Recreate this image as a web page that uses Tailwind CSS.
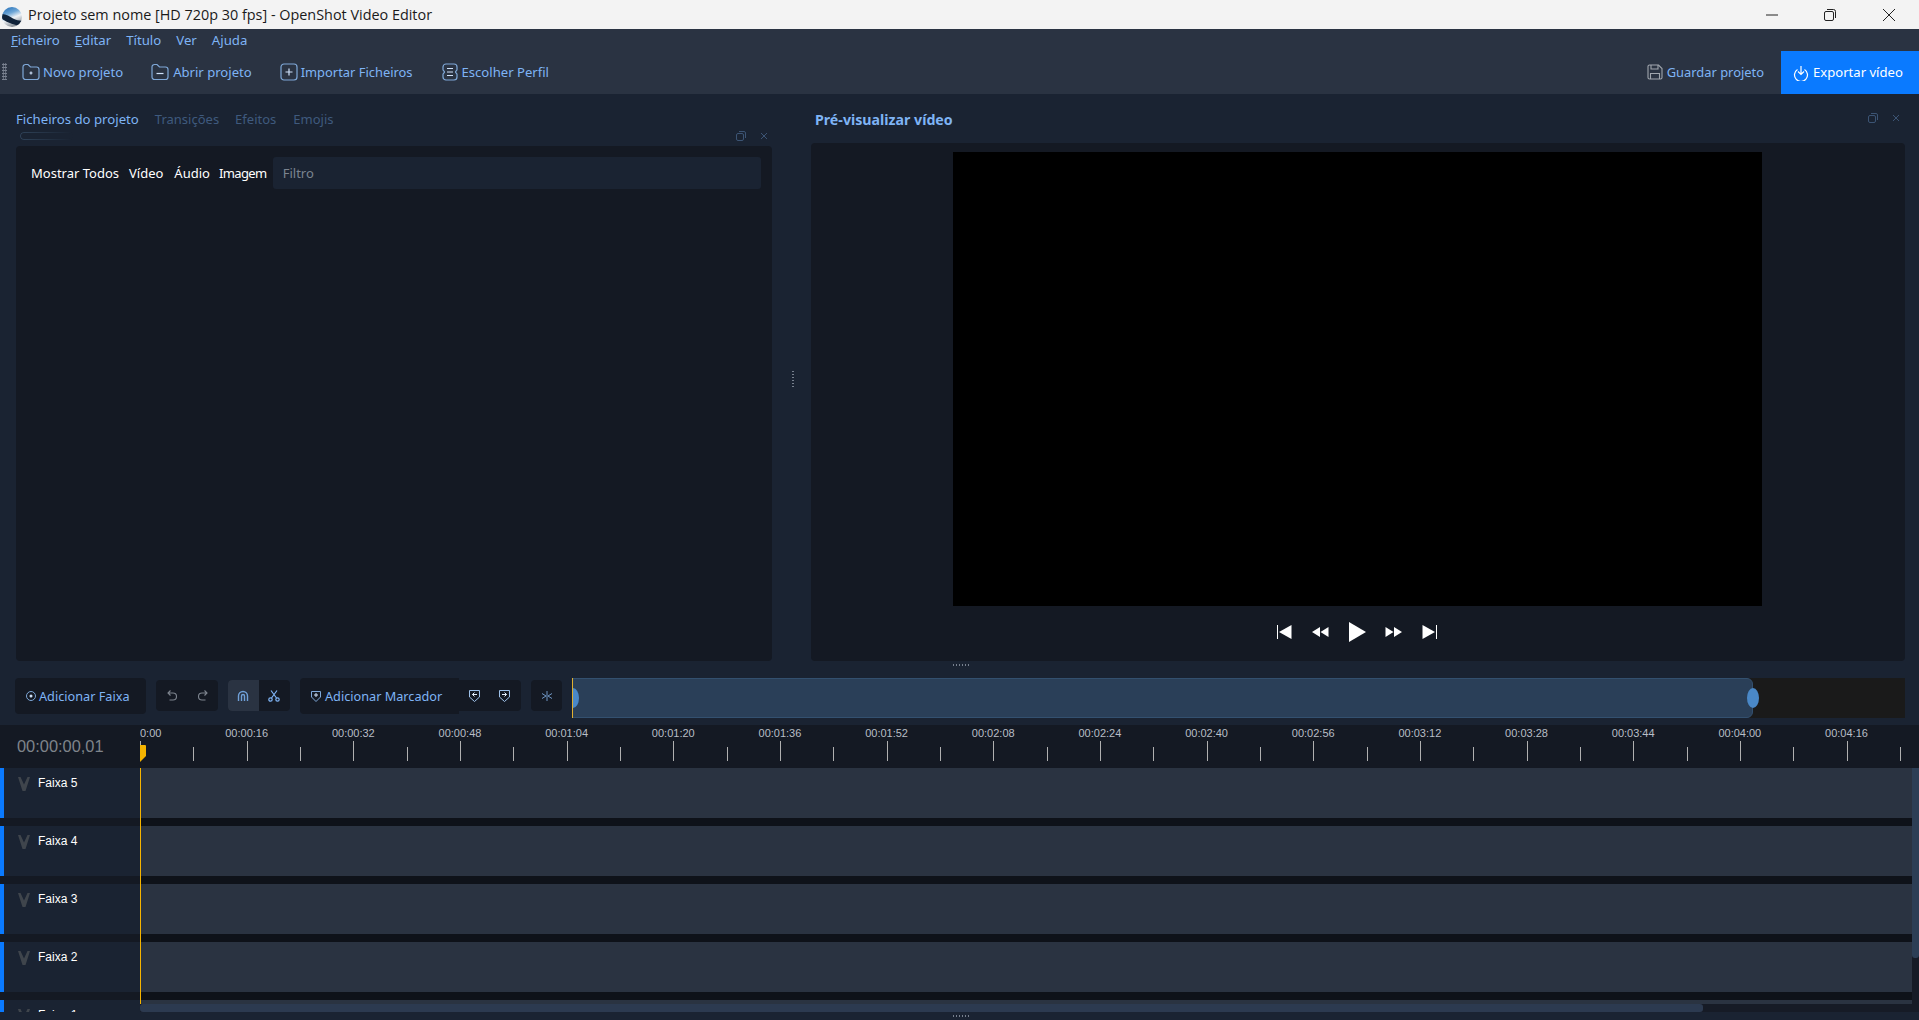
<!DOCTYPE html>
<html>
<head>
<meta charset="utf-8">
<script src="https://cdn.jsdelivr.net/npm/@tailwindcss/browser@4"></script>
</head>
<body class="m-0 overflow-hidden">
<div class="w-[1919px] h-[1020px] flex flex-col overflow-hidden bg-[#1a2332] font-['Noto_Sans',sans-serif] text-[13px]">

  <!-- title bar -->
  <div class="h-[29px] shrink-0 bg-[#f3f3f3] flex items-center text-[#1a1a1a]">
    <svg class="ml-[2px] mt-[4px] w-[20px] h-[20px]" viewBox="0 0 20 20">
      <defs>
        <linearGradient id="g" x1="0.3" y1="0" x2="0.7" y2="1"><stop offset="0" stop-color="#2f78bd"/><stop offset="0.3" stop-color="#6ea6d6"/><stop offset="0.55" stop-color="#eef2f6"/><stop offset="1" stop-color="#6f7780"/></linearGradient>
        <clipPath id="c"><circle cx="10" cy="10" r="10"/></clipPath>
      </defs>
      <circle cx="10" cy="10" r="10" fill="url(#g)"/>
      <path clip-path="url(#c)" d="M0 7 C4 7 8 9.500 11 11.500 C14 13 17 13.500 20 14 L20 19 C13 18.500 6 16 0 12 Z" fill="#10233a"/>
    </svg>
    <span class="ml-[6px] text-[14.4px] font-['Open_Sans',sans-serif]">Projeto sem nome [HD 720p 30 fps] - OpenShot Video Editor</span>
    <div class="ml-auto flex items-center">
      <div class="w-[58px] flex justify-center"><svg class="w-[14px] h-[14px]" viewBox="0 0 14 14"><path d="M1 7H13" stroke="#222" stroke-width="1"/></svg></div>
      <div class="w-[58px] mr-[1px] flex justify-center"><svg class="w-[14px] h-[14px]" viewBox="0 0 14 14" fill="none" stroke="#222"><rect x="1.5" y="3.5" width="9" height="9" rx="1.5"/><path d="M4 1.5H10.5a2 2 0 0 1 2 2V10"/></svg></div>
      <div class="w-[58px] mr-[1px] flex justify-center"><svg class="w-[14px] h-[14px]" viewBox="0 0 14 14" stroke="#222" stroke-width="1"><path d="M1 1L13 13M13 1L1 13"/></svg></div>
    </div>
  </div>

  <!-- menu bar -->
  <div class="h-[22px] shrink-0 bg-[#2a3342] flex items-center pl-[11px] pt-[2px] gap-[15px] text-[#7fb4f5] text-[13.2px]">
    <span><span class="underline">F</span>icheiro</span>
    <span><span class="underline">E</span>ditar</span>
    <span>Título</span>
    <span>Ver</span>
    <span>Ajuda</span>
  </div>

  <!-- toolbar -->
  <div class="h-[43px] shrink-0 bg-[#2a3342] flex items-center text-[#7fb4f5] text-[13.1px]">
    <div class="ml-[2px] w-[5px] h-[17px] mb-[2px] bg-[radial-gradient(#7a8290_1px,transparent_1px)] bg-[length:2.5px_3px]"></div>
    <div class="ml-[15px] flex items-center gap-[3px]">
      <svg class="w-[18px] h-[18px]" viewBox="0 0 18 18" fill="none" stroke="#7fa8d8" stroke-width="1.2"><path d="M1 4a2.5 2.5 0 0 1 2.5-2.5H6L8.5 4h6A2.5 2.5 0 0 1 17 6.5V14a2.5 2.5 0 0 1-2.5 2.5h-11A2.5 2.5 0 0 1 1 14Z"/><path d="M7.5 10h3M9 8.5v3" stroke="#cfe2fa"/></svg>
      <span>Novo projeto</span>
    </div>
    <div class="ml-[28px] flex items-center gap-[4px]">
      <svg class="w-[18px] h-[18px]" viewBox="0 0 18 18" fill="none" stroke="#7fa8d8" stroke-width="1.2"><path d="M1 4a2.5 2.5 0 0 1 2.5-2.5H6L8.5 4h6A2.5 2.5 0 0 1 17 6.5V14a2.5 2.5 0 0 1-2.5 2.5h-11A2.5 2.5 0 0 1 1 14Z"/><path d="M5.5 10.5h7" stroke="#cfe2fa"/></svg>
      <span>Abrir projeto</span>
    </div>
    <div class="ml-[28px] flex items-center gap-[3px]">
      <svg class="w-[18px] h-[18px]" viewBox="0 0 18 18" fill="none" stroke="#7fa8d8" stroke-width="1.2"><rect x="1" y="1" width="16" height="16" rx="3"/><path d="M5.5 9h7M9 5.5v7" stroke="#cfe2fa"/></svg>
      <span class="text-[12.9px]">Importar Ficheiros</span>
    </div>
    <div class="ml-[28px] flex items-center gap-[3px]">
      <svg class="w-[18px] h-[18px]" viewBox="0 0 18 18" fill="none" stroke="#7fa8d8" stroke-width="1.2"><path d="M5 1H13a3 3 0 0 1 3 3v2.500c0 1.500-1.500 1.500-1.500 2.500s1.500 1 1.500 2.500V14a3 3 0 0 1-3 3H5a3 3 0 0 1-3-3v-2.500c0-1.500 1.500-1.500 1.500-2.500S2 8 2 6.500V4a3 3 0 0 1 3-3Z"/><path d="M6 5.500h6M6 9h6M6 12.500h6" stroke="#cfe2fa"/></svg>
      <span>Escolher Perfil</span>
    </div>
    <div class="ml-auto flex items-center gap-[4px] mr-[17px]">
      <svg class="w-[16px] h-[16px]" viewBox="0 0 16 16" fill="none" stroke="#a0a6ae" stroke-width="1.1"><path d="M1 2.500A1.500 1.500 0 0 1 2.500 1h9L15 4.500v9a1.500 1.500 0 0 1-1.500 1.500h-11A1.500 1.500 0 0 1 1 13.500Z"/><path d="M4 1v4h7V1M3.500 15V9.500h9V15"/></svg>
      <span class="text-[12.9px]">Guardar projeto</span>
    </div>
    <div class="w-[138px] h-[43px] bg-[#0a7aff] flex items-center pl-[12px] gap-[4px] text-white">
      <svg class="w-[16px] h-[16px]" viewBox="0 0 16 16" fill="none" stroke="#fff" stroke-width="1.2"><path d="M4.500 4.500A6.500 6.500 0 1 0 11.500 4.500"/><path d="M8 1v8M5 6.500L8 9.500 11 6.500"/></svg>
      <span>Exportar vídeo</span>
    </div>
  </div>

  <!-- main panes -->
  <div class="h-[571px] shrink-0 flex">
    <!-- left pane -->
    <div class="w-[772px] pl-[16px] flex flex-col">
      <div class="relative h-[52px] shrink-0 flex items-start pt-[16px] gap-[16px] text-[13px] text-[#3f5a7e]">
        <span class="text-[13.2px] text-[#7fb4f5]">Ficheiros do projeto</span>
        <span>Transições</span>
        <span>Efeitos</span>
        <span class="ml-[1px]">Emojis</span>
        <div class="absolute left-[4px] top-[38px] w-[53px] h-[8px] rounded-[4px] border border-[#2f4258] border-r-0 [mask-image:linear-gradient(to_right,black,transparent)]"></div>
        <svg class="absolute right-[26px] top-[37px] w-[10px] h-[10px]" viewBox="0 0 10 10" fill="none" stroke="#3c5474"><rect x="0.500" y="2.500" width="7" height="7" rx="1.500"/><path d="M3 .5h5a1.500 1.500 0 0 1 1.500 1.500V7"/></svg>
        <svg class="absolute right-[3px] top-[37px] w-[10px] h-[10px]" viewBox="0 0 10 10" stroke="#3c5474"><path d="M2 2L8 8M8 2L2 8"/></svg>
      </div>
      <div class="flex-1 bg-[#141923] rounded-[4px] mb-[4px] pt-[11px] pl-[15px] pr-[11px]">
        <div class="flex items-center h-[32px] pt-[2px] text-white">
          <span>Mostrar Todos</span>
          <span class="ml-[10px]">Vídeo</span>
          <span class="ml-[11px]">Áudio</span>
          <span class="ml-[9px] tracking-[-0.6px]">Imagem</span>
          <div class="ml-[6px] flex-1 h-[32px] self-start mt-[-2px] pt-[2px] bg-[#1a2332] rounded-[3px] flex items-center pl-[10px] text-[#7b8490]">Filtro</div>
        </div>
      </div>
    </div>
    <!-- splitter -->
    <div class="w-[39px] shrink-0 flex justify-center items-start pt-[277px] pl-[2px]">
      <div class="w-[2px] h-[17px] bg-[repeating-linear-gradient(to_bottom,#77808e_0_1px,transparent_1px_3px)]"></div>
    </div>
    <!-- right pane -->
    <div class="flex-1 pr-[14px] flex flex-col">
      <div class="relative h-[49px] shrink-0 pl-[4px] pt-[15px] font-bold text-[14.2px] text-[#7fb4f5]">Pré-visualizar vídeo
        <svg class="absolute right-[27px] top-[19px] w-[10px] h-[10px]" viewBox="0 0 10 10" fill="none" stroke="#3c5474"><rect x="0.500" y="2.500" width="7" height="7" rx="1.500"/><path d="M3 .5h5a1.500 1.500 0 0 1 1.500 1.500V7"/></svg>
        <svg class="absolute right-[4px] top-[19px] w-[10px] h-[10px]" viewBox="0 0 10 10" stroke="#3c5474"><path d="M2 2L8 8M8 2L2 8"/></svg>
      </div>
      <div class="flex-1 bg-[#141923] rounded-[4px] mb-[4px] pr-[2px] flex flex-col items-center pt-[9px]">
        <div class="w-[809px] h-[454px] bg-black"></div>
        <div class="flex-1 flex items-center gap-[19px] pb-[3px]">
          <svg class="w-[16px] h-[16px]" viewBox="0 0 16 16" fill="#fff"><rect x="1" y="1" width="1" height="14"/><path d="M15.500 1V15L3 8Z"/></svg>
          <svg class="w-[18px] h-[12px]" viewBox="0 0 18 12" fill="#fff"><path d="M9 1V11L1 6ZM17.500 1V11L9.500 6Z"/></svg>
          <svg class="w-[18px] h-[20px]" viewBox="0 0 18 20" fill="#fff"><path d="M1 0V20L18 10Z"/></svg>
          <svg class="w-[18px] h-[12px]" viewBox="0 0 18 12" fill="#fff"><path d="M9 1V11L17 6ZM.5 1V11L8.500 6Z"/></svg>
          <svg class="w-[16px] h-[16px]" viewBox="0 0 16 16" fill="#fff"><rect x="14" y="1" width="1" height="14"/><path d="M.5 1V15L13 8Z"/></svg>
        </div>
      </div>
    </div>
  </div>

  <!-- horizontal splitter -->
  <div class="h-[13px] shrink-0 flex justify-center items-start pl-[4px]">
    <div class="w-[17px] h-[2px] mt-[-1px] bg-[repeating-linear-gradient(to_right,#77808e_0_1px,transparent_1px_3px)]"></div>
  </div>

  <!-- timeline toolbar -->
  <div class="h-[47px] shrink-0 flex items-start pl-[15px] pr-[14px] text-[#7fb4f5] text-[12.7px]">
    <div class="h-[36px] w-[131px] bg-[#141923] rounded-[4px] flex items-center pl-[11px] gap-[3px]">
      <svg class="w-[10px] h-[10px]" viewBox="0 0 10 10" fill="none" stroke="#7fa8d8"><circle cx="5" cy="5" r="4.500"/><circle cx="5" cy="5" r="1.500" fill="#cfe2fa" stroke="none"/></svg>
      <span class="pt-[2px]">Adicionar Faixa</span>
    </div>
    <div class="ml-[10px] mt-[2px] h-[31px] w-[62px] bg-[#141923] rounded-[4px] flex items-center">
      <div class="w-[31px] flex justify-center"><svg class="w-[10px] h-[11px]" viewBox="0 0 10 11" fill="none" stroke="#7d848e" stroke-width="1.100"><path d="M3.500 .5L1 3 3.500 5.500M1 3h5a3 3 0 0 1 0 7H2.500"/></svg></div>
      <div class="w-[31px] flex justify-center"><svg class="w-[10px] h-[11px]" viewBox="0 0 10 11" fill="none" stroke="#7d848e" stroke-width="1.100"><path d="M6.500 .5L9 3 6.500 5.500M9 3H4a3 3 0 0 0 0 7h3.500"/></svg></div>
    </div>
    <div class="ml-[10px] mt-[2px] h-[31px] w-[62px] bg-[#141923] rounded-[4px] flex overflow-hidden">
      <div class="w-[31px] pr-[2px] bg-[#2a3342] flex items-center justify-center">
        <svg class="w-[12px] h-[12px]" viewBox="0 0 12 12" fill="none" stroke="#6fa0d8" stroke-width="1.400"><path d="M1.500 11V6a4.500 4.500 0 0 1 9 0v5"/><path d="M4.500 11V6a1.500 1.500 0 0 1 3 0v5"/></svg>
      </div>
      <div class="flex-1 pr-[2px] flex items-center justify-center">
        <svg class="w-[12px] h-[12px]" viewBox="0 0 12 12" fill="none" stroke="#7fb4f5" stroke-width="1.200"><path d="M3 .5L8.500 8M9 .5L3.500 8"/><circle cx="2.500" cy="9.500" r="1.700"/><circle cx="9.500" cy="9.500" r="1.700"/></svg>
      </div>
    </div>
    <div class="ml-[10px] h-[36px] w-[159px] bg-[#141923] rounded-l-[4px] flex items-center pl-[11px] gap-[4px]">
      <svg class="w-[10px] h-[12px]" viewBox="0 0 10 12" fill="none" stroke="#7fa8d8"><path d="M.5 1.500h9V7L5 11.500.5 7Z"/><path d="M3 5h4M5 3v4" stroke="#cfe2fa"/></svg>
      <span class="pt-[2px]">Adicionar Marcador</span>
    </div>
    <div class="mt-[2px] h-[31px] w-[62px] bg-[#141923] rounded-r-[4px] flex items-center">
      <div class="w-[30px] flex justify-center"><svg class="w-[11px] h-[13px]" viewBox="0 0 11 13" fill="none" stroke="#9fc2ea"><path d="M.5 1.500h10V8L5.500 12.500.5 8Z"/><path d="M8 5.500H3.500M5.500 3.500l-2 2 2 2" stroke="#e4effc"/></svg></div>
      <div class="w-[30px] flex justify-center"><svg class="w-[11px] h-[13px]" viewBox="0 0 11 13" fill="none" stroke="#9fc2ea"><path d="M.5 1.500h10V8L5.500 12.500.5 8Z"/><path d="M3 5.500h4.500M5.500 3.500l2 2-2 2" stroke="#e4effc"/></svg></div>
    </div>
    <div class="ml-[10px] mt-[2px] h-[31px] w-[31px] bg-[#141923] rounded-[4px] flex items-center justify-center">
      <svg class="w-[12px] h-[10px]" viewBox="0 0 12 10" fill="none" stroke="#6f96c4"><path d="M6 0V10M1 2.500L5 5 1 7.500M11 2.500L7 5 11 7.500"/></svg>
    </div>
    <div class="relative ml-[10px] h-[40px] flex-1 bg-[#1a1a1a]">
      <div class="h-[40px] w-[1181px] bg-[#2a3f58] border border-[#33506f] rounded-r-[6px]"></div>
      <div class="absolute left-0 top-0 bottom-0 w-[1px] bg-[#e0b030]"></div>
      <div class="absolute left-[1px] top-[10px] w-[6px] h-[20px] rounded-[0_100%_100%_0/0_50%_50%_0] bg-[#4a88c7]"></div>
      <div class="absolute left-[1175px] top-[10px] w-[12px] h-[20px] rounded-[50%] bg-[#4a88c7]"></div>
    </div>
  </div>

  <!-- ruler -->
  <div class="h-[43px] shrink-0 bg-[#141923] flex font-['Liberation_Sans',sans-serif] overflow-hidden">
    <div class="w-[140px] shrink-0 pl-[17px] pt-[11px] text-[16.4px] leading-[20px] text-[#7f848b]">00:00:00,01</div>
    <div class="relative flex-1 overflow-hidden">
      <div class="h-[16px] flex text-[11px] leading-[16px] text-[#b8bec6] whitespace-nowrap">
        <div class="w-[53.333px] shrink-0 pl-[0px]">0:00</div>
        <div class="w-[106.667px] shrink-0 text-center">00:00:16</div>
        <div class="w-[106.667px] shrink-0 text-center">00:00:32</div>
        <div class="w-[106.667px] shrink-0 text-center">00:00:48</div>
        <div class="w-[106.667px] shrink-0 text-center">00:01:04</div>
        <div class="w-[106.667px] shrink-0 text-center">00:01:20</div>
        <div class="w-[106.667px] shrink-0 text-center">00:01:36</div>
        <div class="w-[106.667px] shrink-0 text-center">00:01:52</div>
        <div class="w-[106.667px] shrink-0 text-center">00:02:08</div>
        <div class="w-[106.667px] shrink-0 text-center">00:02:24</div>
        <div class="w-[106.667px] shrink-0 text-center">00:02:40</div>
        <div class="w-[106.667px] shrink-0 text-center">00:02:56</div>
        <div class="w-[106.667px] shrink-0 text-center">00:03:12</div>
        <div class="w-[106.667px] shrink-0 text-center">00:03:28</div>
        <div class="w-[106.667px] shrink-0 text-center">00:03:44</div>
        <div class="w-[106.667px] shrink-0 text-center">00:04:00</div>
        <div class="w-[106.667px] shrink-0 text-center">00:04:16</div>
      </div>
      <div class="h-[20px] flex items-end">
        <div class="w-[53.333px] h-[20px] shrink-0 border-l border-[#b0b0b0]"></div>
        <div class="w-[53.333px] h-[14px] shrink-0 border-l border-[#b0b0b0]"></div>
        <div class="w-[53.333px] h-[20px] shrink-0 border-l border-[#b0b0b0]"></div>
        <div class="w-[53.333px] h-[14px] shrink-0 border-l border-[#b0b0b0]"></div>
        <div class="w-[53.333px] h-[20px] shrink-0 border-l border-[#b0b0b0]"></div>
        <div class="w-[53.333px] h-[14px] shrink-0 border-l border-[#b0b0b0]"></div>
        <div class="w-[53.333px] h-[20px] shrink-0 border-l border-[#b0b0b0]"></div>
        <div class="w-[53.333px] h-[14px] shrink-0 border-l border-[#b0b0b0]"></div>
        <div class="w-[53.333px] h-[20px] shrink-0 border-l border-[#b0b0b0]"></div>
        <div class="w-[53.333px] h-[14px] shrink-0 border-l border-[#b0b0b0]"></div>
        <div class="w-[53.333px] h-[20px] shrink-0 border-l border-[#b0b0b0]"></div>
        <div class="w-[53.333px] h-[14px] shrink-0 border-l border-[#b0b0b0]"></div>
        <div class="w-[53.333px] h-[20px] shrink-0 border-l border-[#b0b0b0]"></div>
        <div class="w-[53.333px] h-[14px] shrink-0 border-l border-[#b0b0b0]"></div>
        <div class="w-[53.333px] h-[20px] shrink-0 border-l border-[#b0b0b0]"></div>
        <div class="w-[53.333px] h-[14px] shrink-0 border-l border-[#b0b0b0]"></div>
        <div class="w-[53.333px] h-[20px] shrink-0 border-l border-[#b0b0b0]"></div>
        <div class="w-[53.333px] h-[14px] shrink-0 border-l border-[#b0b0b0]"></div>
        <div class="w-[53.333px] h-[20px] shrink-0 border-l border-[#b0b0b0]"></div>
        <div class="w-[53.333px] h-[14px] shrink-0 border-l border-[#b0b0b0]"></div>
        <div class="w-[53.333px] h-[20px] shrink-0 border-l border-[#b0b0b0]"></div>
        <div class="w-[53.333px] h-[14px] shrink-0 border-l border-[#b0b0b0]"></div>
        <div class="w-[53.333px] h-[20px] shrink-0 border-l border-[#b0b0b0]"></div>
        <div class="w-[53.333px] h-[14px] shrink-0 border-l border-[#b0b0b0]"></div>
        <div class="w-[53.333px] h-[20px] shrink-0 border-l border-[#b0b0b0]"></div>
        <div class="w-[53.333px] h-[14px] shrink-0 border-l border-[#b0b0b0]"></div>
        <div class="w-[53.333px] h-[20px] shrink-0 border-l border-[#b0b0b0]"></div>
        <div class="w-[53.333px] h-[14px] shrink-0 border-l border-[#b0b0b0]"></div>
        <div class="w-[53.333px] h-[20px] shrink-0 border-l border-[#b0b0b0]"></div>
        <div class="w-[53.333px] h-[14px] shrink-0 border-l border-[#b0b0b0]"></div>
        <div class="w-[53.333px] h-[20px] shrink-0 border-l border-[#b0b0b0]"></div>
        <div class="w-[53.333px] h-[14px] shrink-0 border-l border-[#b0b0b0]"></div>
        <div class="w-[53.333px] h-[20px] shrink-0 border-l border-[#b0b0b0]"></div>
        <div class="w-[53.333px] h-[14px] shrink-0 border-l border-[#b0b0b0]"></div>
      </div>
      <svg class="absolute left-0 top-[20px] w-[6px] h-[17px]" viewBox="0 0 6 17" fill="#f5b400"><path d="M0 0H5a1 1 0 0 1 1 1V11L0 17Z"/></svg>
    </div>
  </div>

  <!-- tracks -->
  <div class="relative h-[244px] shrink-0 overflow-hidden font-['Liberation_Sans',sans-serif] text-[12px] text-white flex">
    <div class="w-[1912px] shrink-0 h-[236px] overflow-hidden flex flex-col">
      <div class="flex h-[50px] shrink-0"><div class="w-[4px] bg-[#0a7aff]"></div><div class="w-[136px] bg-[#1a2332] flex items-start pt-[9px] pl-[14px] gap-[8px]"><svg class="w-[12px] h-[14px]" viewBox="0 0 12 14" fill="#3f454c"><path d="M0 0H2.500L6 7.500 9.500 0H12L7.500 14H4.500Z"/></svg><span class="leading-[14px] mt-[-1px]">Faixa 5</span></div><div class="flex-1 bg-[#2a3341]"></div></div>
      <div class="flex h-[8px] shrink-0"><div class="w-[140px] bg-[#141923]"></div><div class="flex-1 bg-[#0e1219]"></div></div>
      <div class="flex h-[50px] shrink-0"><div class="w-[4px] bg-[#0a7aff]"></div><div class="w-[136px] bg-[#1a2332] flex items-start pt-[9px] pl-[14px] gap-[8px]"><svg class="w-[12px] h-[14px]" viewBox="0 0 12 14" fill="#3f454c"><path d="M0 0H2.500L6 7.500 9.500 0H12L7.500 14H4.500Z"/></svg><span class="leading-[14px] mt-[-1px]">Faixa 4</span></div><div class="flex-1 bg-[#2a3341]"></div></div>
      <div class="flex h-[8px] shrink-0"><div class="w-[140px] bg-[#141923]"></div><div class="flex-1 bg-[#0e1219]"></div></div>
      <div class="flex h-[50px] shrink-0"><div class="w-[4px] bg-[#0a7aff]"></div><div class="w-[136px] bg-[#1a2332] flex items-start pt-[9px] pl-[14px] gap-[8px]"><svg class="w-[12px] h-[14px]" viewBox="0 0 12 14" fill="#3f454c"><path d="M0 0H2.500L6 7.500 9.500 0H12L7.500 14H4.500Z"/></svg><span class="leading-[14px] mt-[-1px]">Faixa 3</span></div><div class="flex-1 bg-[#2a3341]"></div></div>
      <div class="flex h-[8px] shrink-0"><div class="w-[140px] bg-[#141923]"></div><div class="flex-1 bg-[#0e1219]"></div></div>
      <div class="flex h-[50px] shrink-0"><div class="w-[4px] bg-[#0a7aff]"></div><div class="w-[136px] bg-[#1a2332] flex items-start pt-[9px] pl-[14px] gap-[8px]"><svg class="w-[12px] h-[14px]" viewBox="0 0 12 14" fill="#3f454c"><path d="M0 0H2.500L6 7.500 9.500 0H12L7.500 14H4.500Z"/></svg><span class="leading-[14px] mt-[-1px]">Faixa 2</span></div><div class="flex-1 bg-[#2a3341]"></div></div>
      <div class="flex h-[8px] shrink-0"><div class="w-[140px] bg-[#141923]"></div><div class="flex-1 bg-[#0e1219]"></div></div>
      <div class="flex h-[50px] shrink-0"><div class="w-[4px] bg-[#0a7aff]"></div><div class="w-[136px] bg-[#1a2332]"></div><div class="flex-1 bg-[#2a3341]"></div></div>
    </div>
    <!-- Faixa 1 header clipped above the scroll bar, as in the reference -->
    <div class="absolute left-[4px] top-[232px] w-[136px] h-[12px] overflow-hidden bg-[#1a2332] flex items-start pt-[9px] pl-[14px] gap-[8px]"><svg class="w-[12px] h-[14px]" viewBox="0 0 12 14" fill="#3f454c"><path d="M0 0H2.500L6 7.500 9.500 0H12L7.500 14H4.500Z"/></svg><span class="leading-[14px] mt-[-1px]">Faixa 1</span></div>
    <div class="absolute left-0 top-[232px] w-[4px] h-[12px] bg-[#0a7aff]"></div>
    <!-- vertical scroll bar -->
    <div class="w-[7px] h-[236px] bg-[#161b26]">
      <div class="h-[190px] bg-[#2c3e55] rounded-b-[3px]"></div>
    </div>
    <!-- horizontal scroll bar -->
    <div class="absolute left-[140px] right-0 top-[236px] h-[8px] bg-[#161b26]">
      <div class="w-[1563px] h-[8px] bg-[#2c3a50] rounded-[3px]"></div>
    </div>
    <!-- playhead -->
    <div class="absolute left-[140px] top-0 w-[1px] h-[236px] bg-[#f5b400]"></div>
  </div>

  <!-- bottom splitter -->
  <div class="flex-1 flex justify-center items-center pl-[4px]">
    <div class="w-[17px] h-[2px] bg-[repeating-linear-gradient(to_right,#77808e_0_1px,transparent_1px_3px)]"></div>
  </div>
</div>
</body>
</html>
